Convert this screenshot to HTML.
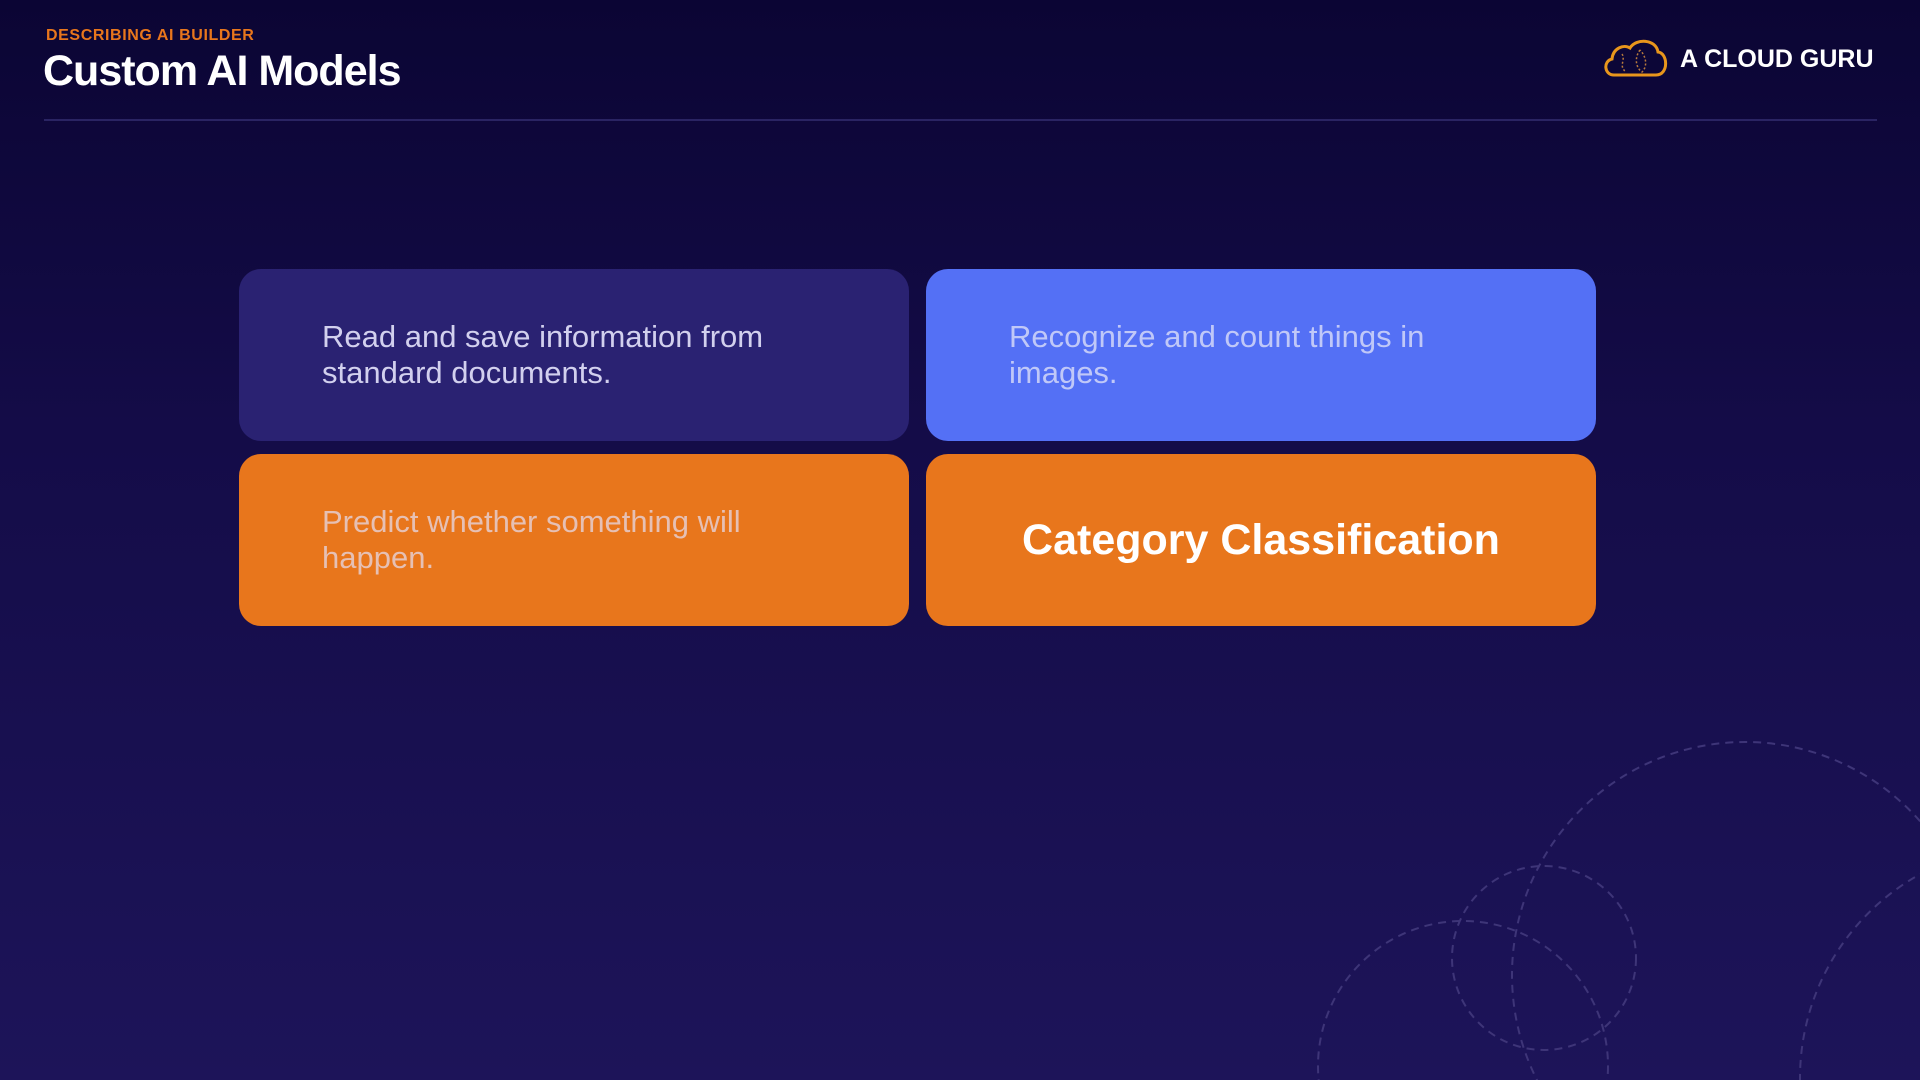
<!DOCTYPE html>
<html><head><style>
*{margin:0;padding:0;box-sizing:border-box}
html,body{width:1920px;height:1080px;overflow:hidden}
body{background:linear-gradient(#0b0534 0%,#140c48 40%,#1d1459 100%);font-family:"Liberation Sans",sans-serif;position:relative}
.lbl{position:absolute;left:46px;top:27px;color:#e8761c;font-weight:bold;font-size:16px;letter-spacing:.6px}
.ttl{position:absolute;left:43px;top:47px;color:#fff;font-weight:bold;font-size:43px;letter-spacing:-1px}
.line{position:absolute;left:44px;top:119px;width:1833px;height:2px;background:#2a2463}
.logo{position:absolute;left:1680px;top:45px;color:#fff;font-weight:bold;font-size:25px}
.card{position:absolute;width:670px;height:172px;border-radius:22px;font-size:31px;line-height:36px;padding:50px 0 0 83px}
</style></head><body>
<div class="lbl">DESCRIBING AI BUILDER</div>
<div class="ttl">Custom AI Models</div>
<div class="line"></div>
<svg style="position:absolute;left:1600px;top:36px" width="72" height="44" viewBox="0 0 72 44"><path d="M14 39 C4 39 3 25 12 23 C13 12 24 8 30 12 C36 2 56 3 58 16 C68 17 69 39 56 39 Z" fill="none" stroke="#e8961c" stroke-width="3"/><path d="M22 18 C26 24 18 30 26 36 M40 14 C34 22 36 32 42 36 C48 30 46 20 40 14" fill="none" stroke="#b87a3c" stroke-width="1.5" stroke-dasharray="2 2"/></svg>
<div class="logo">A CLOUD GURU</div>
<div class="card" style="left:239px;top:269px;background:#2a2272;color:#d2d0ee">Read and save information from<br>standard documents.</div>
<div class="card" style="left:926px;top:269px;background:#5470f5;color:#c0c8f8">Recognize and count things in<br>images.</div>
<div class="card" style="left:239px;top:454px;background:#e8761c;color:#e6c0b4">Predict whether something will<br>happen.</div>
<div class="card" style="left:926px;top:454px;background:#e8761c;color:#fff;font-weight:bold;font-size:43px;padding:0;display:flex;align-items:center;justify-content:center">Category Classification</div>
<svg style="position:absolute;left:0;top:0;display:block" width="1920" height="1080"><g fill="none" stroke="#3e3578" stroke-width="2" stroke-dasharray="8 6"><circle cx="1745" cy="975" r="233"/><circle cx="1544" cy="958" r="92"/><circle cx="1463" cy="1066" r="145"/><circle cx="2033" cy="1078" r="233"/></g></svg>
</body></html>
